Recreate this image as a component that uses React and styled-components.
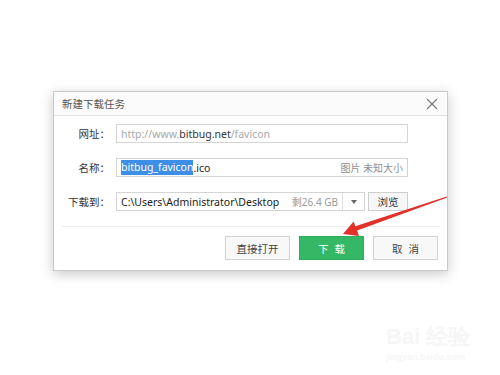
import React from "react";
import styled, { createGlobalStyle } from "styled-components";

const Global = createGlobalStyle`
  html, body { margin: 0; padding: 0; background: #fff; }
  body {
    width: 500px;
    height: 375px;
    overflow: hidden;
    font-family: "Noto Sans", "Noto Sans CJK SC", sans-serif;
  }
`;

const Page = styled.div`
  position: relative;
  width: 500px;
  height: 375px;
  padding: 91px 0 0 53px;
  box-sizing: border-box;
`;

const Dialog = styled.div`
  width: 395px;
  box-sizing: border-box;
  background: #fff;
  border: 1px solid #c9c9c9;
  box-shadow: 0 3px 12px rgba(0, 0, 0, 0.22);
`;

const TitleBar = styled.div`
  height: 23px;
  display: flex;
  align-items: center;
  justify-content: space-between;
  padding: 0 8px 0 8px;
  border-bottom: 1px solid #e3e3e3;
  background: #fbfbfb;
  font-size: 10.5px;
  color: #555;
`;

const Close = styled.div`
  width: 14px;
  height: 14px;
  display: flex;
  align-items: center;
  justify-content: center;
`;

const Body = styled.div`
  display: flex;
  flex-direction: column;
  gap: 15px;
  padding: 8px 39px 15px 0;
`;

const Row = styled.div`
  display: grid;
  grid-template-columns: 56px 1fr;
  column-gap: 6px;
  align-items: center;
`;

const Label = styled.div`
  text-align: right;
  font-size: 10.5px;
  color: #333;
`;

const Field = styled.div`
  height: 19px;
  box-sizing: border-box;
  border: 1px solid #d4d4d4;
  display: flex;
  align-items: center;
  padding-left: 4px;
  font-size: 10.5px;
  color: ${p => (p.$muted ? "#a8a8a8" : "#222")};
  white-space: nowrap;
  overflow: hidden;
`;

const Strong = styled.span`
  color: #333;
`;

const Selected = styled.span`
  background: #3d8ee6;
  color: #fff;
  line-height: 15px;
`;

const Hint = styled.span`
  margin-left: auto;
  padding-right: 4px;
  color: #8f8f8f;
  font-size: 10px;
`;

const PathLine = styled.div`
  display: flex;
  gap: 3px;
`;

const PathField = styled(Field)`
  flex: 1;
  padding-right: 0;
`;

const Free = styled.span`
  margin-left: auto;
  color: #9a9a9a;
  padding-right: 4px;
  font-size: 10px;
`;

const Drop = styled.div`
  width: 21px;
  height: 100%;
  border-left: 1px solid #e0e0e0;
  display: flex;
  align-items: center;
  justify-content: center;
`;

const SmallButton = styled.div`
  width: 40px;
  height: 19px;
  box-sizing: border-box;
  border: 1px solid #cfcfcf;
  background: #f7f7f7;
  display: flex;
  align-items: center;
  justify-content: center;
  font-size: 10.5px;
  color: #333;
`;

const Divider = styled.div`
  height: 1px;
  background: #ececec;
  margin: 0 7px 0 8px;
`;

const Footer = styled.div`
  display: flex;
  justify-content: flex-end;
  gap: 9px;
  padding: 9px 9px 10px 0;
`;

const Button = styled.div`
  width: 65px;
  height: 24px;
  box-sizing: border-box;
  display: flex;
  align-items: center;
  justify-content: center;
  font-size: 10.5px;
  letter-spacing: ${p => (p.$spaced ? "6px" : "0")};
  text-indent: ${p => (p.$spaced ? "6px" : "0")};
  border: 1px solid ${p => (p.$primary ? "#2fae5b" : "#d2d2d2")};
  background: ${p => (p.$primary ? "#34b865" : "#f8f8f8")};
  color: ${p => (p.$primary ? "#fff" : "#444")};
`;

const Arrow = styled.svg`
  position: absolute;
  left: 0;
  top: 0;
  pointer-events: none;
`;

const Watermark = styled.div`
  position: absolute;
  left: 386px;
  top: 326px;
  color: #f6f6f6;
  font-family: "Liberation Sans", sans-serif;
  line-height: 1;
`;

const MarkBig = styled.div`
  font-size: 22px;
  font-weight: bold;
`;

const MarkSmall = styled.div`
  font-size: 9px;
  font-weight: bold;
  margin-top: 5px;
`;

export default function App() {
  return (
    <>
      <Global />
      <Page>
        <Dialog>
          <TitleBar>
            <span>新建下载任务</span>
            <Close>
              <svg width="12" height="12" viewBox="0 0 12 12">
                <path d="M1 1L11 11M11 1L1 11" stroke="#777" strokeWidth="1.1" />
              </svg>
            </Close>
          </TitleBar>
          <Body>
            <Row>
              <Label>网址：</Label>
              <Field $muted>
                http://www.<Strong>bitbug.net</Strong>/favicon
              </Field>
            </Row>
            <Row>
              <Label>名称：</Label>
              <Field>
                <Selected>bitbug_favicon</Selected>.ico
                <Hint>图片 未知大小</Hint>
              </Field>
            </Row>
            <Row>
              <Label>下载到：</Label>
              <PathLine>
                <PathField>
                  C:\Users\Administrator\Desktop
                  <Free>剩26.4 GB</Free>
                  <Drop>
                    <svg width="6" height="4" viewBox="0 0 6 4">
                      <path d="M0 0H6L3 4Z" fill="#666" />
                    </svg>
                  </Drop>
                </PathField>
                <SmallButton>浏览</SmallButton>
              </PathLine>
            </Row>
          </Body>
          <Divider />
          <Footer>
            <Button>直接打开</Button>
            <Button $primary $spaced>下载</Button>
            <Button $spaced>取消</Button>
          </Footer>
        </Dialog>
        <Arrow width="500" height="375" viewBox="0 0 500 375">
          <polygon
            points="447.3,197.6 357.1,230.6 359,236 343,234 353.6,221.5 355.3,226.3 446.7,196.4"
            fill="#e2302a"
          />
        </Arrow>
        <Watermark>
          <MarkBig>Bai 经验</MarkBig>
          <MarkSmall>jingyan.baidu.com</MarkSmall>
        </Watermark>
      </Page>
    </>
  );
}
